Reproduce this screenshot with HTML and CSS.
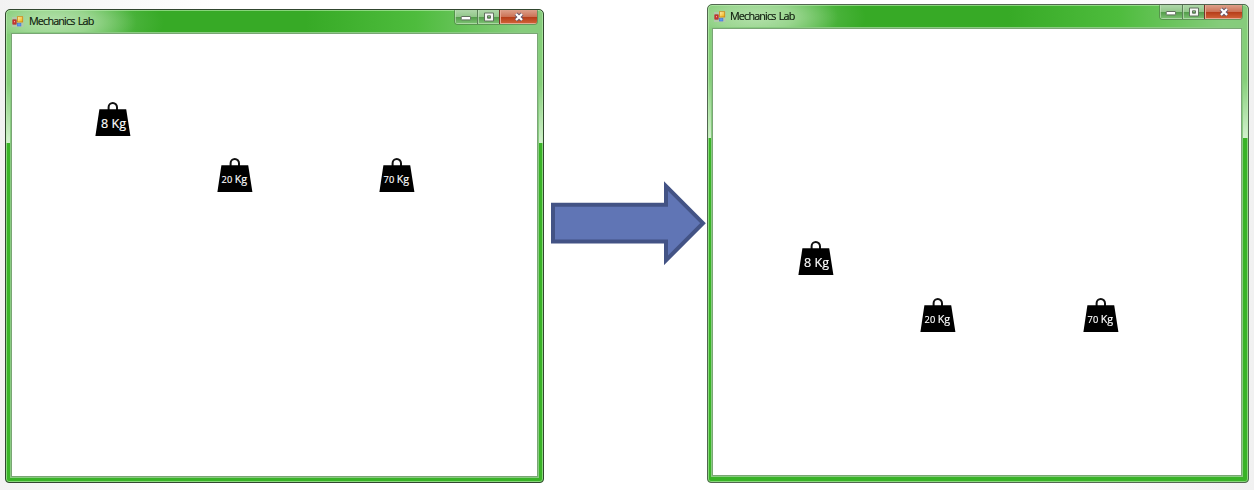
FILE: index.html
```html
<!DOCTYPE html>
<html lang="en">
<head>
<meta charset="utf-8">
<title>Mechanics Lab</title>
<link rel="stylesheet" href="styles.css">
</head>
<body>
<svg class="defs" width="0" height="0">
  <defs>
    <linearGradient id="gold" x1="0" y1="0" x2="1" y2="1"><stop offset="0" stop-color="#fff4ba"/><stop offset="1" stop-color="#f0a900"/></linearGradient>
    <symbol id="app" viewBox="0 0 12 12">
      <path d="M0 1H5V0H11.5V11H0Z" fill="#b9c3b3" opacity=".75"/>
      <rect x=".8" y="3.8" width="3.4" height="4.4" fill="#c93430" stroke="#a12b27" stroke-width=".6"/>
      <rect x="2" y="5" width="1" height="1.3" fill="#f1a09a"/>
      <rect x="5.4" y=".7" width="5.3" height="5.3" fill="url(#gold)" stroke="#c98a12" stroke-width=".8"/>
      <rect x="5.3" y="7.6" width="3.6" height="2.4" fill="#5c98f5" stroke="#3f70d0" stroke-width=".6"/>
    </symbol>
    <symbol id="weight" viewBox="0 0 36 35">
      <path d="M13.6 8V5.2a4.2 4.2 0 0 1 8.4 0V8" fill="none" stroke="#111" stroke-width="2"/>
      <path d="M4.4 7.2H31.2L35.4 34H.4Z" fill="#000"/>
    </symbol>
    <symbol id="min" viewBox="0 0 12 10"><rect x="1.2" y="4.5" width="9.4" height="3.4" rx=".6" fill="#fff" stroke="#62705f"/></symbol>
    <symbol id="max" viewBox="0 0 12 10"><path fill-rule="evenodd" d="M1.5 1H10.5V9H1.5ZM4.5 3.8V6.2H7.5V3.8Z" fill="#f5f7f4" stroke="#62705f"/></symbol>
    <symbol id="close" viewBox="0 0 12 10"><path d="M3 2L9 8M9 2L3 8" stroke="#67576a" stroke-width="4"/><path d="M3 2L9 8M9 2L3 8" stroke="#fff" stroke-width="2.2"/></symbol>
  </defs>
</svg>
<main class="scene">
  <section class="window before">
    <header class="titlebar">
      <svg class="app-icon"><use href="#app"/></svg>
      <h1 class="title">Mechanics Lab</h1>
      <div class="controls">
        <span class="btn min"><svg><use href="#min"/></svg></span>
        <span class="btn max"><svg><use href="#max"/></svg></span>
        <span class="btn close"><svg><use href="#close"/></svg></span>
      </div>
    </header>
    <div class="client">
      <svg class="weight b8" viewBox="0 0 36 35"><use href="#weight"/><text class="big" x="6" y="26" textLength="25" lengthAdjust="spacingAndGlyphs">8 Kg</text></svg>
      <svg class="weight b20" viewBox="0 0 36 35"><use href="#weight"/><text class="num" x="4.6" y="24.5" textLength="10.6" lengthAdjust="spacingAndGlyphs">20</text><text class="unit" x="17.8" y="25.4" textLength="12.4" lengthAdjust="spacingAndGlyphs">Kg</text></svg>
      <svg class="weight b70" viewBox="0 0 36 35"><use href="#weight"/><text class="num" x="4.6" y="24.5" textLength="10.6" lengthAdjust="spacingAndGlyphs">70</text><text class="unit" x="17.8" y="25.4" textLength="12.4" lengthAdjust="spacingAndGlyphs">Kg</text></svg>
    </div>
  </section>
  <svg class="arrow" viewBox="0 0 156 84"><path d="M2 23.8H115V5.1L152 42.2L115 79.3V60.6H2Z" fill="#6075b5" stroke="#435385" stroke-width="4"/></svg>
  <section class="window after">
    <header class="titlebar">
      <svg class="app-icon"><use href="#app"/></svg>
      <h1 class="title">Mechanics Lab</h1>
      <div class="controls">
        <span class="btn min"><svg><use href="#min"/></svg></span>
        <span class="btn max"><svg><use href="#max"/></svg></span>
        <span class="btn close"><svg><use href="#close"/></svg></span>
      </div>
    </header>
    <div class="client">
      <svg class="weight a8" viewBox="0 0 36 35"><use href="#weight"/><text class="big" x="6" y="26" textLength="25" lengthAdjust="spacingAndGlyphs">8 Kg</text></svg>
      <svg class="weight a20" viewBox="0 0 36 35"><use href="#weight"/><text class="num" x="4.6" y="24.5" textLength="10.6" lengthAdjust="spacingAndGlyphs">20</text><text class="unit" x="17.8" y="25.4" textLength="12.4" lengthAdjust="spacingAndGlyphs">Kg</text></svg>
      <svg class="weight a70" viewBox="0 0 36 35"><use href="#weight"/><text class="num" x="4.6" y="24.5" textLength="10.6" lengthAdjust="spacingAndGlyphs">70</text><text class="unit" x="17.8" y="25.4" textLength="12.4" lengthAdjust="spacingAndGlyphs">Kg</text></svg>
    </div>
  </section>
</main>
</body>
</html>
```
FILE: styles.css
```css
* { box-sizing: border-box; }
body { margin: 0; overflow: hidden; background: #fff; font-family: "Open Sans", "Noto Sans", sans-serif; }
.defs { position: absolute; }
.scene {
  display: flex; align-items: flex-end; width: 1254px; height: 490px; padding: 0 5px 7px;
  background: linear-gradient(90deg, #f2f2f2, #fff 220px, #fff 1030px, #f1f1f1);
}
.window {
  flex: none; display: flex; flex-direction: column; border: 1px solid #31462f; border-radius: 5px 5px 4px 4px;
  padding: 0 5px 5px;
  box-shadow: inset 0 0 0 1px rgba(190, 240, 180, .6);
  background:
    linear-gradient(180deg, #84cf78 0, #84cf78 50px, #d3f0ce 100%) 0 24px / 7px 109px no-repeat,
    linear-gradient(180deg, #84cf78 0, #84cf78 50px, #d3f0ce 100%) 100% 24px / 7px 109px no-repeat,
    radial-gradient(ellipse 110px 38px at 48px 12px, rgba(184, 226, 176, .95) 0, rgba(170, 220, 160, .8) 35%, rgba(110, 195, 100, .3) 75%, rgba(90, 185, 80, 0) 100%) 0 0 / 100% 24px no-repeat,
    linear-gradient(90deg, #6fc463 0, #55bb48 80px, #37aa26 130px, #37aa26 300px, #4ebc3d 410px, #86cc7c 515px, #86cc7c) 0 0 / 100% 24px no-repeat,
    #39b327;
}
.before { width: 539px; height: 474px; }
.after { width: 542px; height: 479px; padding: 0 6px 6px 4px; filter: blur(.45px); border-color: #526650; }
.titlebar { display: flex; align-items: flex-start; height: 23px; flex: none; padding-left: 1px; }
.after .titlebar { padding-left: 2px; margin-right: -1px; }
.app-icon { width: 12px; height: 12px; margin-top: 6px; }
.title { margin: 3px 0 0 5px; font-size: 10.8px; line-height: 16px; font-weight: 400; letter-spacing: -.85px; word-spacing: 1.2px; color: #0c180a; -webkit-text-stroke: .15px #0c180a; white-space: nowrap; }
.after .title { margin-left: 4px; }
.controls { display: flex; margin-left: auto; height: 15px; border: 1px solid #46644180; border-top: 0; border-radius: 0 0 4px 4px; overflow: hidden; }
.btn { display: flex; align-items: center; justify-content: center; width: 22px; border-left: 1px solid #5b8057; box-shadow: inset 1px -1px 0 #c7e5c1a0; background: linear-gradient(#afd7a9 0, #92c78a 48%, #529b49 50%, #7fc475 100%); }
.btn.min { border-left: 0; }
.btn.close { width: 38px; border-left-color: #74362a; box-shadow: inset 1px -1px 0 #e8a993; background: linear-gradient(#dda08a 0, #cc7356 48%, #b53c18 50%, #d3653a 100%); }
.btn svg { width: 12px; height: 10px; flex: none; }
.client { position: relative; flex: 1; border: 1px solid #79a674; background: #fff; box-shadow: 0 0 0 1px #8acb82; }
.weight { position: absolute; width: 36px; height: 35px; }
.weight text { fill: #fff; stroke: #fff; stroke-width: .15px; }
.big { font-size: 12.6px; }
.num { font-size: 9.4px; }
.unit { font-size: 11px; }
.b8 { left: 83px; top: 68px; }
.b20 { left: 205px; top: 124.4px; }
.b70 { left: 367px; top: 124.4px; }
.a8 { left: 84.5px; top: 212px; }
.a20 { left: 207px; top: 269.4px; }
.a70 { left: 370.4px; top: 269.4px; }
.arrow { flex: none; width: 156px; height: 84px; margin: 0 0 218px 7px; }
```
